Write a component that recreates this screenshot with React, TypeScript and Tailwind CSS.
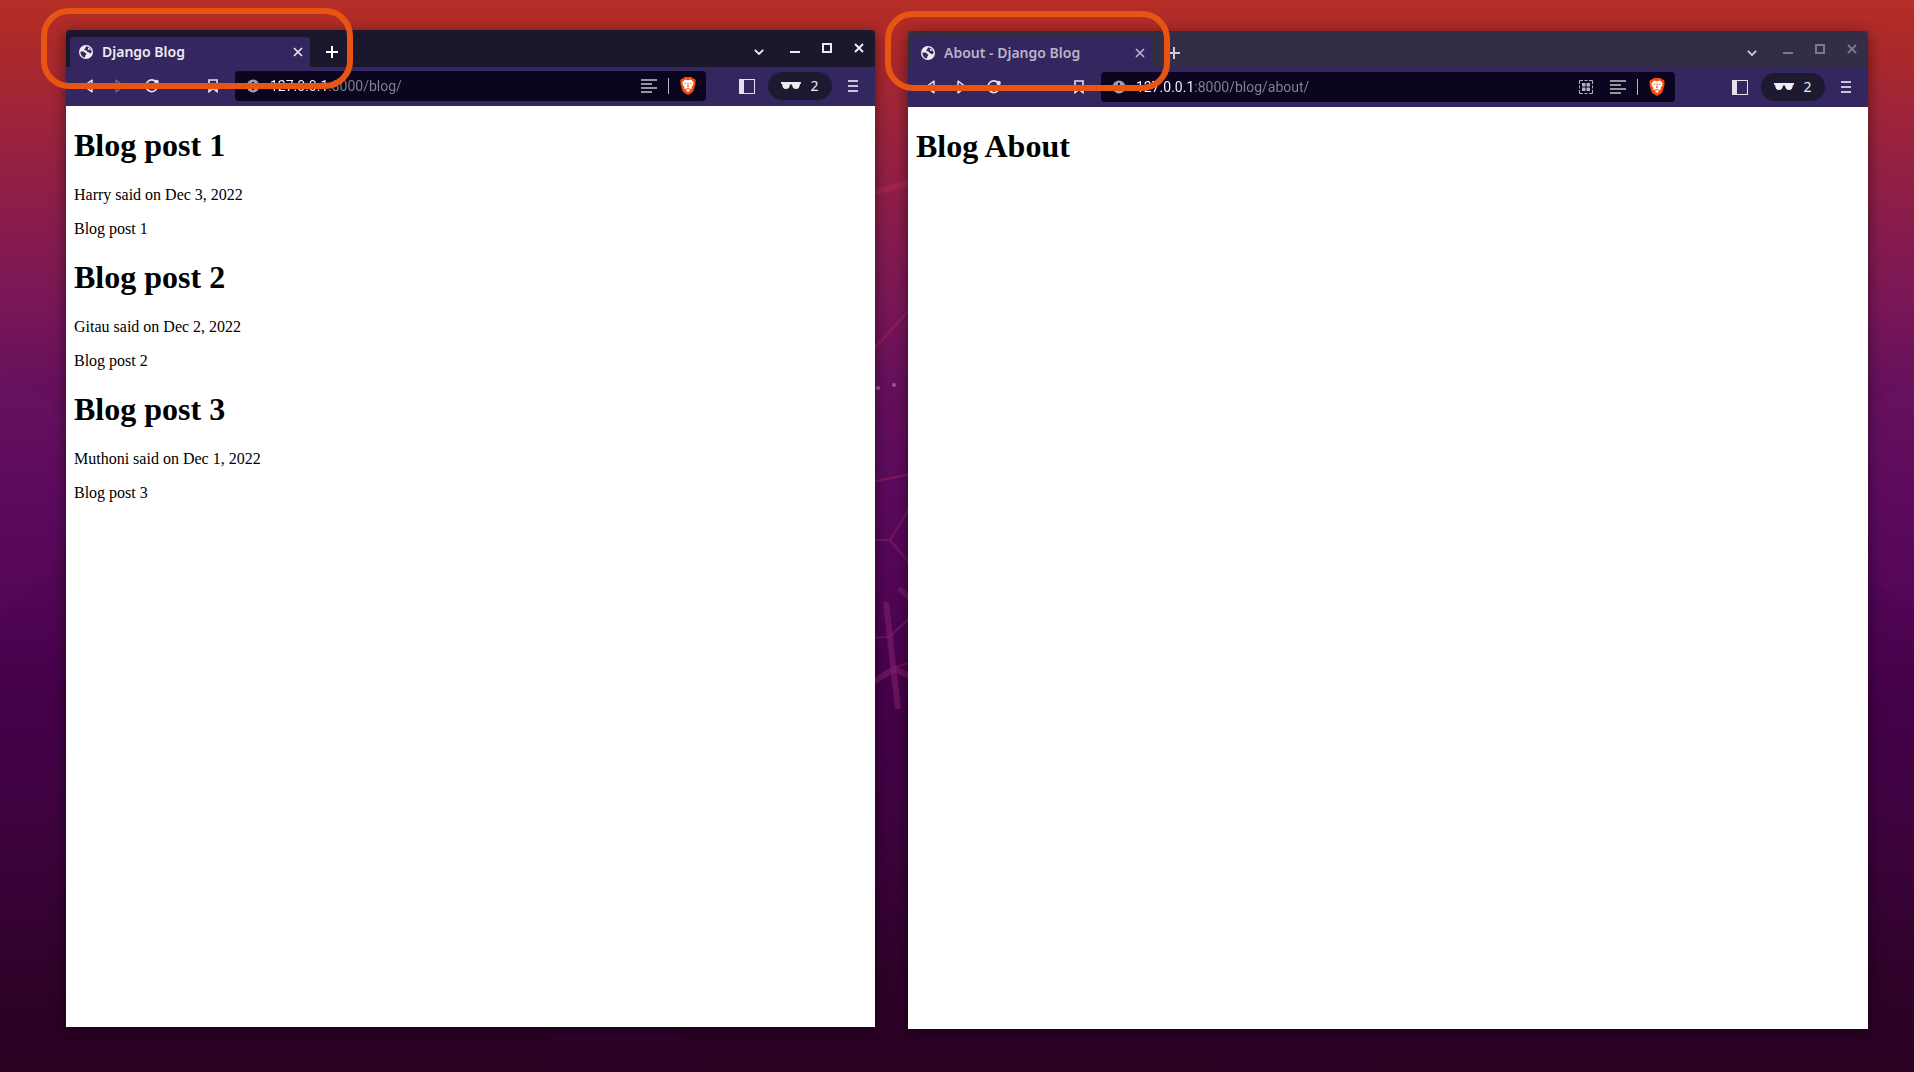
import React from "react";

type Post = { title: string; byline: string; body: string };

const posts: Post[] = [
  { title: "Blog post 1", byline: "Harry said on Dec 3, 2022", body: "Blog post 1" },
  { title: "Blog post 2", byline: "Gitau said on Dec 2, 2022", body: "Blog post 2" },
  { title: "Blog post 3", byline: "Muthoni said on Dec 1, 2022", body: "Blog post 3" },
];

function Wallpaper() {
  return (
    <svg
      className="absolute inset-0 h-full w-full"
      viewBox="0 0 1914 1072"
      preserveAspectRatio="none"
      aria-hidden="true"
    >
      <defs>
        <linearGradient id="sky" x1="0" y1="0" x2="0" y2="1">
          <stop offset="0" stopColor="#b52d26" />
          <stop offset="0.05" stopColor="#ab292b" />
          <stop offset="0.12" stopColor="#9b233c" />
          <stop offset="0.2" stopColor="#8a1d4a" />
          <stop offset="0.28" stopColor="#7a1757" />
          <stop offset="0.36" stopColor="#66105c" />
          <stop offset="0.46" stopColor="#5b0a5b" />
          <stop offset="0.56" stopColor="#500554" />
          <stop offset="0.65" stopColor="#450149" />
          <stop offset="0.74" stopColor="#400343" />
          <stop offset="0.8" stopColor="#3b033a" />
          <stop offset="0.9" stopColor="#30022b" />
          <stop offset="1" stopColor="#290122" />
        </linearGradient>
      </defs>
      <rect width="1914" height="1072" fill="url(#sky)" />
      <g fill="#8a2a8a" fillOpacity="0.06">
        <path d="M0 362 L140 484 L140 492 L0 615Z" />
        <path d="M1914 375 L1780 477 L1780 533 L1914 606Z" />
      </g>
      <g fill="#50005a" fillOpacity="0.1">
        <path d="M535 1000 L660 1000 L706 1072 L562 1072Z" />
        <path d="M1260 1000 L1390 1000 L1363 1072 L1215 1072Z" />
      </g>
      <g fill="none" stroke="#b82d5c" strokeOpacity="0.4" strokeWidth="2">
        <path d="M870 193 L912 182" strokeWidth="6" />
        <path d="M870 353 L912 307" />
        <path d="M870 482 L912 474" />
      </g>
      <g fill="none" stroke="#96286e" strokeOpacity="0.45" strokeWidth="2">
        <path d="M870 540 L890 540 L912 504 M890 540 L912 566" />
        <path d="M870 638 L889 637 L912 616 M895 667 L912 662" />
      </g>
      <g fill="none" stroke="#80206a" strokeOpacity="0.6">
        <path d="M899 588 L912 601" strokeWidth="5" />
        <path d="M886 602 L898 709" strokeWidth="6" />
        <path d="M870 684 L894 669 L912 677" strokeWidth="6" />
      </g>
      <g fill="#a0559c">
        <circle cx="878" cy="388" r="2" />
        <circle cx="894" cy="385" r="2" />
      </g>
    </svg>
  );
}

function GlobeIcon() {
  return (
    <svg width="14" height="14" viewBox="0 0 14 14" aria-hidden="true">
      <circle cx="7" cy="7" r="7" fill="#efedf3" />
      <path
        d="M7 1.6 C6 2.2 7.2 2.9 6 3.6 C4.8 4.2 5.2 5.4 6.2 5.3 C7.8 5.2 8.2 6 8.2 7 C9.6 7 10.4 7.6 11 8.6 C11.4 8 12.4 7.6 12.6 7 C12.6 3.8 10.2 1.6 7 1.6Z"
        fill="#34265f"
      />
      <path
        d="M1.5 6.4 L4.6 6.6 C5.6 6.8 5.4 7.8 6.6 8 C8 8.3 7.4 9.6 6.6 10 C6.2 10.6 6.4 11.6 5.8 12.4 C3 11.8 1.2 9.4 1.5 6.4Z"
        fill="#34265f"
      />
      <path d="M9.2 2.4 C8.4 3.2 9.6 3.6 8.8 4.6 C9.6 5.4 10.6 5 12 5.4 C11.6 4 10.6 2.9 9.2 2.4Z" fill="#efedf3" />
    </svg>
  );
}

function CrossIcon({ size, weight }: { size: number; weight: number }) {
  return (
    <svg width={size} height={size} viewBox="0 0 10 10" aria-hidden="true">
      <path d="M1 1 L9 9 M9 1 L1 9" stroke="currentColor" strokeWidth={weight} />
    </svg>
  );
}

function ShieldIcon() {
  return (
    <svg width="16" height="18" viewBox="0 0 16 18" aria-hidden="true">
      <path
        d="M4.6 0 H11.4 L13 1.6 L14.6 1.7 L15.8 4 L15.3 5.6 L15.6 6.6 L13.6 13.4 C13 15 10.4 16.6 8 18 C5.6 16.6 3 15 2.4 13.4 L.4 6.6 L.7 5.6 L.2 4 L1.4 1.7 L3 1.6Z"
        fill="#fb4a0b"
      />
      <path
        d="M5 2.6 L8 3.2 L11 2.6 L13.6 5.2 L13.1 7.8 L11.6 10 L12 11.4 L10.2 12 L8.8 11.2 H7.2 L5.8 12 L4 11.4 L4.4 10 L2.9 7.8 L2.4 5.2Z M8 11.9 L10.4 13.1 L8 15 L5.6 13.1Z"
        fill="#fff"
      />
      <path
        d="M4.2 6 L6.4 6.4 L6.2 7.3 L4.9 7Z M11.8 6 L9.6 6.4 L9.8 7.3 L11.1 7Z M7.6 5.6 H8.4 V8.6 L9.2 9.4 L8 10.1 L6.8 9.4 L7.6 8.6Z"
        fill="#fb4a0b"
      />
    </svg>
  );
}

function QrIcon() {
  return (
    <svg width="14" height="14" viewBox="0 0 14 14" aria-hidden="true">
      <path
        d="M.5 4 V.5 H4 M10 .5 H13.5 V4 M13.5 10 V13.5 H10 M4 13.5 H.5 V10 M5.5 .5 H8.5 M5.5 13.5 H8.5 M.5 5.5 V8.5 M13.5 5.5 V8.5"
        fill="none"
        stroke="#b5b2bd"
      />
      <path d="M3 3h3.5v3.5H3z M7.5 3H11v3.5H7.5z M3 7.5h3.5V11H3z M7.5 7.5H11V11H7.5z" fill="#b5b2bd" />
    </svg>
  );
}

const iconButton = "flex h-5 w-5 shrink-0 items-center justify-center";

type WindowProps = {
  active: boolean;
  title: string;
  host: string;
  path: string;
  canGoForward?: boolean;
  showQr?: boolean;
  children: React.ReactNode;
};

function BrowserWindow({ active, title, host, path, canGoForward, showQr, children }: WindowProps) {
  const controls = active ? "text-[#eeecf1]" : "text-[#7d7988]";
  return (
    <>
      <header
        className={`flex h-[37px] shrink-0 items-end rounded-t pl-1 ${active ? "bg-[#1b172d]" : "bg-[#332d45]"}`}
      >
        <div className="flex h-[30px] w-60 shrink-0 items-center rounded-t bg-[#34265f] pr-[2px] pl-[9px]">
          <GlobeIcon />
          <span
            className={`ml-[9px] flex-1 truncate text-sm font-semibold ${active ? "text-[#eeecf2]" : "text-[#bab5cb]"}`}
          >
            {title}
          </span>
          <button
            aria-label="Close tab"
            className={`${iconButton} ${active ? "text-[#eeecf2]" : "text-[#bab5cb]"}`}
          >
            <CrossIcon size={10} weight={1.6} />
          </button>
        </div>
        <button
          aria-label="New tab"
          className={`mb-[5px] ml-3 ${iconButton} ${active ? "text-white" : "text-[#cfccd6]"}`}
        >
          <svg width="12" height="12" viewBox="0 0 12 12" aria-hidden="true">
            <path d="M6 0 V12 M0 6 H12" stroke="currentColor" strokeWidth="2" />
          </svg>
        </button>
        <div className={`mb-[9px] ml-auto flex items-center gap-3 pr-[6px] ${controls}`}>
          <button
            aria-label="Search tabs"
            className={`mr-1 pt-2 ${iconButton} ${active ? "text-[#eeecf1]" : "text-[#cfccd6]"}`}
          >
            <svg width="10" height="6" viewBox="0 0 10 6" fill="none" aria-hidden="true">
              <path d="M.8 .8 L5 5 L9.2 .8" stroke="currentColor" strokeWidth="1.8" />
            </svg>
          </button>
          <button aria-label="Minimize" className={iconButton}>
            <svg width="10" height="10" viewBox="0 0 10 10" aria-hidden="true">
              <path d="M0 8 H10 V10 H0Z" fill="currentColor" />
            </svg>
          </button>
          <button aria-label="Maximize" className={iconButton}>
            <svg width="10" height="10" viewBox="0 0 10 10" fill="none" aria-hidden="true">
              <path d="M1 1 H9 V9 H1Z" stroke="currentColor" strokeWidth="2" />
            </svg>
          </button>
          <button aria-label="Close window" className={iconButton}>
            <CrossIcon size={10} weight={2} />
          </button>
        </div>
      </header>

      <nav
        aria-label="Browser toolbar"
        className="flex h-[39px] shrink-0 items-center bg-[#34265f] pr-[13px] pb-px pl-3 text-[#e4e1ea]"
      >
        <button aria-label="Back" className={iconButton}>
          <svg width="10" height="14" viewBox="0 0 10 14" fill="none" aria-hidden="true">
            <path d="M9 1.2 V12.8 L1 7Z" stroke="currentColor" strokeWidth="1.5" strokeLinejoin="round" />
          </svg>
        </button>
        <button
          aria-label="Forward"
          disabled={!canGoForward}
          className={`ml-3 ${iconButton} ${canGoForward ? "" : "text-[#6d6290]"}`}
        >
          <svg width="10" height="14" viewBox="0 0 10 14" fill="none" aria-hidden="true">
            <path d="M1 1.2 V12.8 L9 7Z" stroke="currentColor" strokeWidth="1.5" strokeLinejoin="round" />
          </svg>
        </button>
        <button aria-label="Reload" className={`ml-3 ${iconButton}`}>
          <svg width="14" height="14" viewBox="0 0 14 14" fill="none" aria-hidden="true">
            <path d="M12.2 8.8 A5.8 5.8 0 1 1 11 2.8" stroke="currentColor" strokeWidth="1.7" />
            <circle cx="11.6" cy="3" r="2.2" fill="currentColor" />
          </svg>
        </button>
        <div className={`flex min-w-0 flex-1 items-center ${active ? "mx-[41px]" : "mx-[65px]"}`}>
          <button aria-label="Bookmark this page" className={iconButton}>
            <svg width="10" height="14" viewBox="0 0 10 14" fill="none" aria-hidden="true">
              <path d="M1 1 H9 V12.6 L5 9.4 L1 12.6Z" stroke="currentColor" strokeWidth="1.6" />
            </svg>
          </button>
          <div className="ml-3 flex h-[30px] min-w-0 flex-1 items-center rounded bg-[#0b0520] pr-2 pl-[11px]">
            <svg width="14" height="14" viewBox="0 0 14 14" className="shrink-0" aria-hidden="true">
              <circle cx="7" cy="7" r="6.5" fill="#9e9ca6" />
              <path d="M6 3 H8 V5 H6Z M6 6 H8 V11 H6Z" fill="#0b0520" />
            </svg>
            <input
              aria-label="Address"
              defaultValue={host + path}
              spellCheck={false}
              className="ml-[10px] h-6 min-w-0 flex-1 bg-linear-[90deg,#ffffff_58px,#85838e_58px] bg-clip-text font-['Roboto',sans-serif] text-sm text-transparent outline-none"
            />
            {showQr && (
              <button aria-label="Create QR code" className={`mr-3 ${iconButton}`}>
                <QrIcon />
              </button>
            )}
            <button aria-label="Reader mode" className={iconButton}>
              <svg width="16" height="14" viewBox="0 0 16 14" aria-hidden="true">
                <path d="M0 0h16v2H0z M0 4h11v2H0z M0 8h16v2H0z M0 12h11v2H0z" fill="#96949e" />
              </svg>
            </button>
            <span className="mr-[9px] ml-[9px] h-4 w-px bg-[#b9b7c0]" />
            <button aria-label="Brave Shields" className={iconButton}>
              <ShieldIcon />
            </button>
          </div>
        </div>
        <button aria-label="Side panel" className={`-ml-[10px] ${iconButton}`}>
          <svg width="16" height="15" viewBox="0 0 16 15" aria-hidden="true">
            <path d="M0 0 H16 V15 H0Z M5 1 V14 H15 V1Z" fill="currentColor" fillRule="evenodd" />
          </svg>
        </button>
        <button
          aria-label="2 private windows"
          className="ml-[11px] flex h-7 w-16 shrink-0 items-center justify-center gap-[9px] rounded-full bg-[#1d1931] text-sm text-[#eeecf2]"
        >
          <svg width="20" height="8" viewBox="0 0 20 8" aria-hidden="true">
            <path
              d="M0 0 H20 V1.6 L19 2 C18.6 5 17.6 7 15.2 7 C12.6 7 11.4 5.4 11 2.4 H9 C8.6 5.4 7.4 7 4.8 7 C2.4 7 1.4 5 1 2 L0 1.6Z"
              fill="currentColor"
            />
          </svg>
          2
        </button>
        <button aria-label="Menu" className={`ml-[11px] -mr-px ${iconButton}`}>
          <svg width="10" height="12" viewBox="0 0 10 12" aria-hidden="true">
            <path d="M0 0h10v2H0z M0 5h10v2H0z M0 10h10v2H0z" fill="#c9c5d6" />
          </svg>
        </button>
      </nav>

      <main className="flex-1 bg-white px-2 font-['Liberation_Serif',serif] text-base text-black">
        {children}
      </main>
    </>
  );
}

const pageHeading = "text-[32px] leading-[37px] font-bold";
const windowFrame = "relative flex min-w-0 flex-col rounded-t shadow-[0_3px_14px_rgba(0,0,0,0.5)]";
const marker = "pointer-events-none absolute rounded-[28px] border-[6px] border-[#e85512]";

export default function App() {
  return (
    <div className="relative flex min-h-screen gap-[33px] overflow-hidden pt-[30px] pr-[46px] pb-[43px] pl-[66px] font-['Noto_Sans',sans-serif]">
      <Wallpaper />
      <section aria-label="Blog window" className={`mb-[2px] flex-[809] ${windowFrame}`}>
        <BrowserWindow active title="Django Blog" host="127.0.0.1" path=":8000/blog/">
          {posts.map((post) => (
            <article key={post.title} className="pt-[21px] leading-[18px]">
              <h1 className={pageHeading}>{post.title}</h1>
              <p className="mt-[22px]">{post.byline}</p>
              <p className="mt-4">{post.body}</p>
            </article>
          ))}
        </BrowserWindow>
        <div className={`-top-[22px] -left-[25px] h-[81px] w-[312px] ${marker}`} />
      </section>
      <section aria-label="About window" className={`mt-px flex-[960] ${windowFrame}`}>
        <BrowserWindow
          active={false}
          title="About - Django Blog"
          host="127.0.0.1"
          path=":8000/blog/about/"
          canGoForward
          showQr
        >
          <h1 className={`pt-[21px] ${pageHeading}`}>Blog About</h1>
        </BrowserWindow>
        <div className={`-top-5 -left-[23px] h-20 w-[285px] ${marker}`} />
      </section>
    </div>
  );
}
